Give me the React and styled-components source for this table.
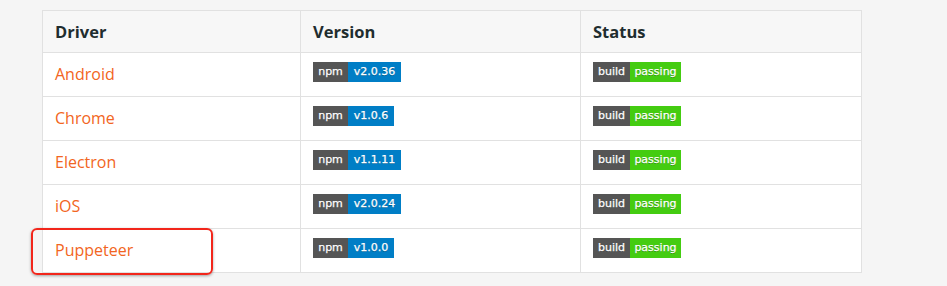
import React from 'react';
import styled, { createGlobalStyle } from 'styled-components';

const GlobalStyle = createGlobalStyle`
  html, body {
    margin: 0;
    padding: 0;
    background: #f5f5f5;
  }
  body {
    font-family: "Open Sans", "Noto Sans", sans-serif;
  }
`

const Page = styled.div`
  padding: 10px 0 0 42px;
  height: 276px;
`

const Table = styled.table`
  border-collapse: collapse;
  width: 819px;
  table-layout: fixed;
  background: #fff;
`

const Col = styled.col`
  width: ${props => props.w}px;
`

const Th = styled.th`
  height: 41px;
  padding: 0 12px;
  text-align: left;
  font-size: 16.5px;
  font-weight: 700;
  color: #1f2d2f;
  background: #f7f7f7;
  border: 1px solid #e1e1e1;
`

const Td = styled.td`
  position: relative;
  height: 43px;
  padding: 0 12px;
  vertical-align: middle;
  border: 1px solid #e1e1e1;
`

const DriverLink = styled.a`
  display: inline-block;
  margin-bottom: 2px;
  color: #f26522;
  font-size: 16px;
  text-decoration: none;
`

const Badge = styled.span`
  display: inline-flex;
  height: 20px;
  margin-bottom: 6px;
  vertical-align: middle;
  font-family: "DejaVu Sans", Verdana, sans-serif;
  font-size: 11px;
  line-height: 20px;
  color: #fff;
  -webkit-text-stroke: 0.25px #fff;
  text-shadow: 0 1px 0 rgba(1, 1, 1, 0.3);
`

const BadgePart = styled.span`
  display: inline-block;
  width: ${props => props.w}px;
  text-align: center;
  background: ${props => props.bg};
`

const Highlight = styled.div`
  position: absolute;
  left: -12px;
  top: -1px;
  width: 178px;
  height: 43px;
  border: 2.5px solid #f2261b;
  border-radius: 6px;
  box-shadow: 0 1px 3px rgba(0, 0, 0, 0.35);
  pointer-events: none;
`

const drivers = [
  { name: 'Android', version: 'v2.0.36', vw: 53 },
  { name: 'Chrome', version: 'v1.0.6', vw: 46 },
  { name: 'Electron', version: 'v1.1.11', vw: 53 },
  { name: 'iOS', version: 'v2.0.24', vw: 53 },
  { name: 'Puppeteer', version: 'v1.0.0', vw: 46, marked: true },
]

export default function App() {
  return (
    <Page>
      <GlobalStyle />
      <Table>
        <colgroup>
          <Col w={258} />
          <Col w={280} />
          <Col w={281} />
        </colgroup>
        <thead>
          <tr>
            <Th>Driver</Th>
            <Th>Version</Th>
            <Th>Status</Th>
          </tr>
        </thead>
        <tbody>
          {drivers.map(d => (
            <tr key={d.name}>
              <Td>
                <DriverLink href="#">{d.name}</DriverLink>
                {d.marked && <Highlight />}
              </Td>
              <Td>
                <Badge>
                  <BadgePart w={35} bg="#555">npm</BadgePart>
                  <BadgePart w={d.vw} bg="#007ec6">{d.version}</BadgePart>
                </Badge>
              </Td>
              <Td>
                <Badge>
                  <BadgePart w={37} bg="#555">build</BadgePart>
                  <BadgePart w={51} bg="#4c1">passing</BadgePart>
                </Badge>
              </Td>
            </tr>
          ))}
        </tbody>
      </Table>
    </Page>
  );
}
